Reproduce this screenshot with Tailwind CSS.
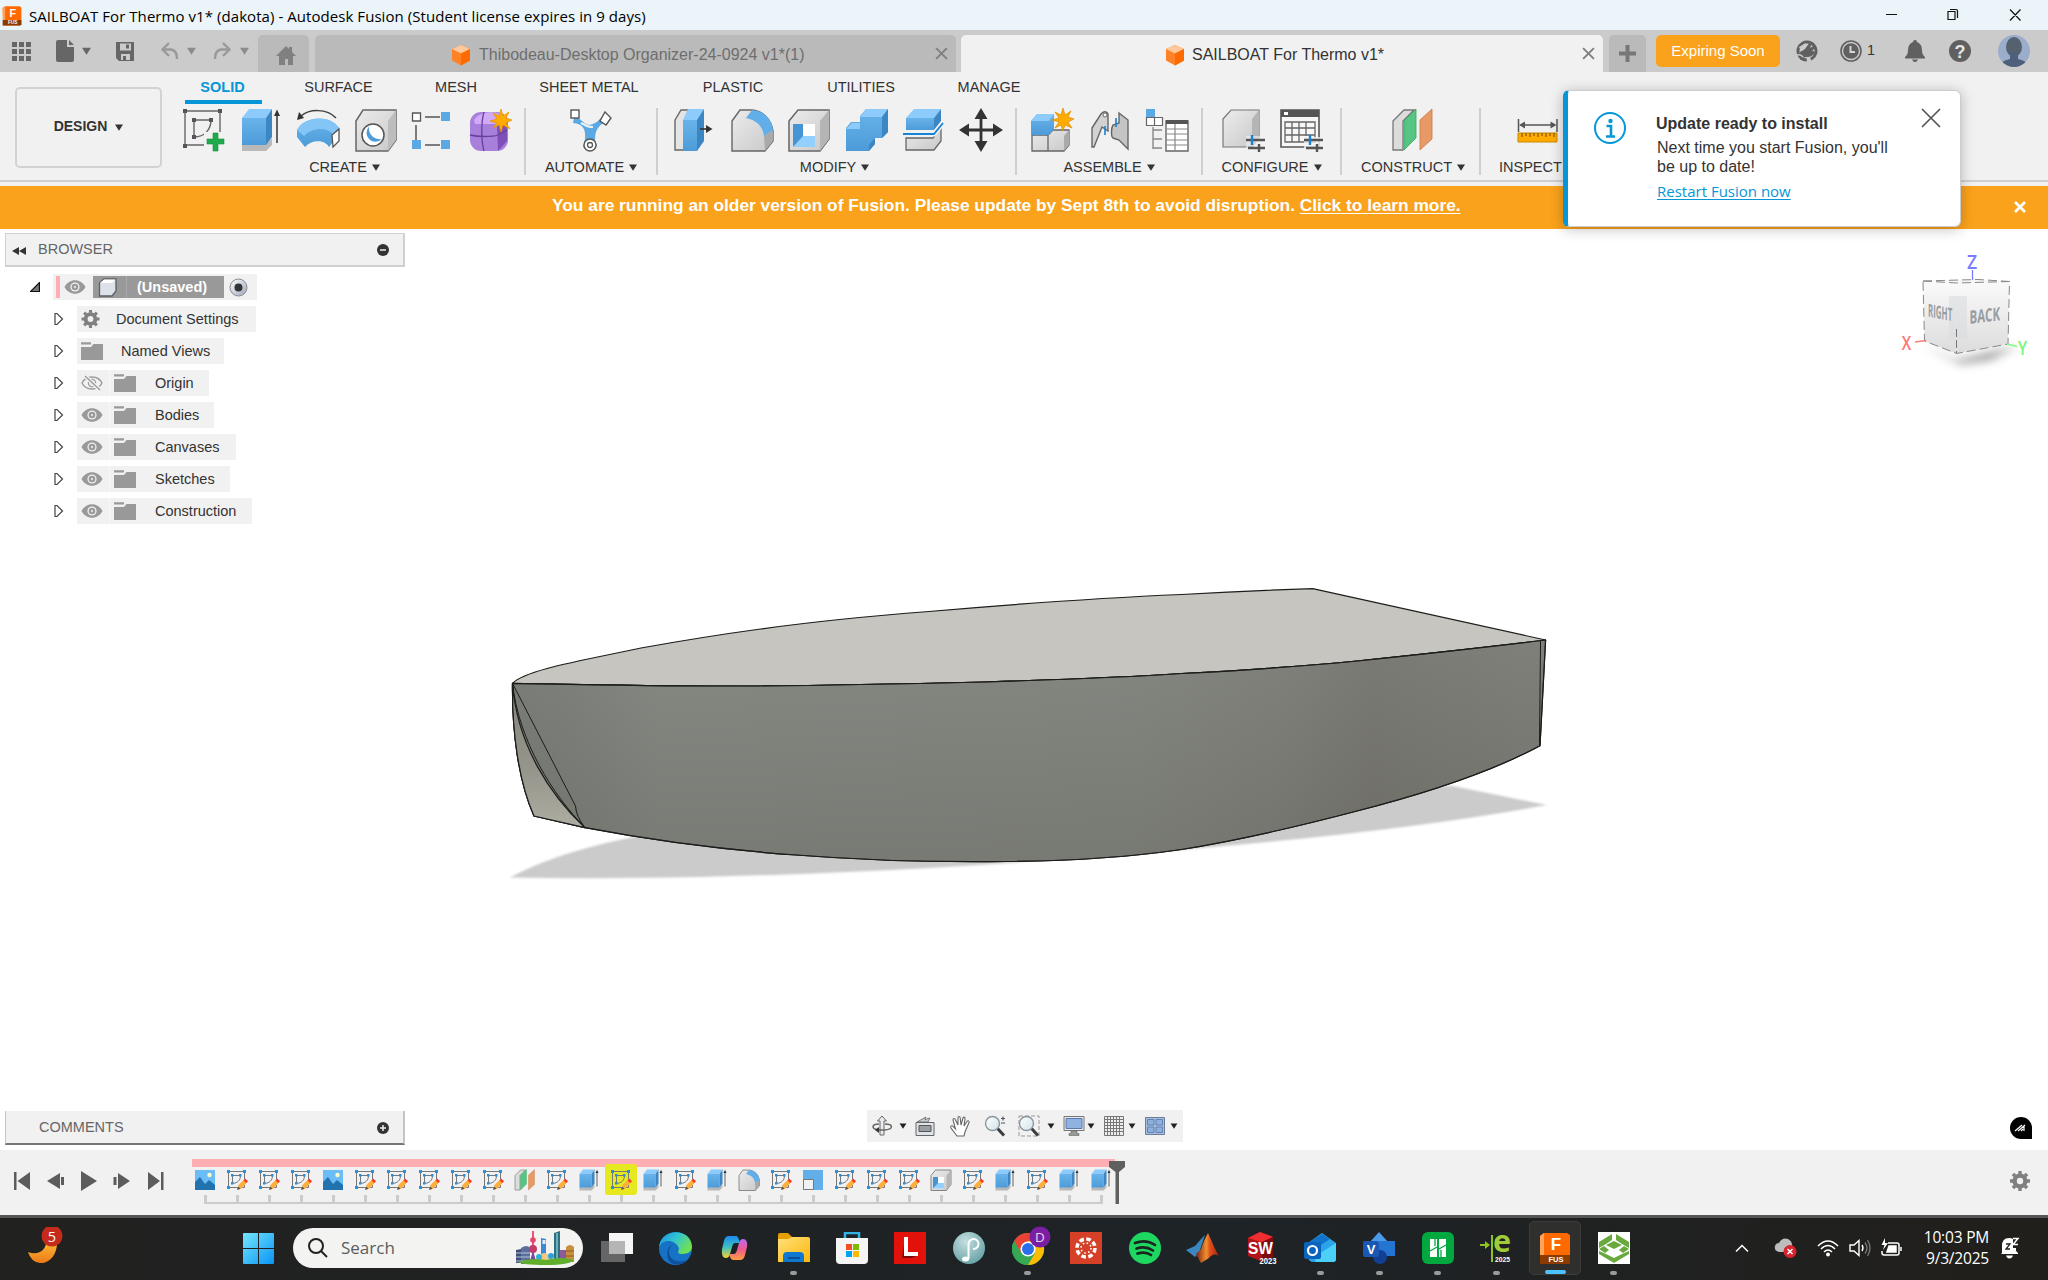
<!DOCTYPE html>
<html lang="en">
<head>
<meta charset="utf-8">
<title>SAILBOAT For Thermo v1* - Autodesk Fusion</title>
<script src="https://cdn.jsdelivr.net/npm/@tailwindcss/browser@4"></script>
</head>
<body class="w-[2048px] h-[1280px] overflow-hidden bg-white font-['Liberation_Sans',Arial,sans-serif] text-[14.5px] text-[#333]">
<svg width="0" height="0" class="absolute">
  <defs>
    <linearGradient id="blueF" x1="0" y1="0" x2="0" y2="1"><stop offset="0" stop-color="#69b3ea"/><stop offset="1" stop-color="#4c9bd8"/></linearGradient>
    <linearGradient id="greyF" x1="0" y1="0" x2="1" y2="1"><stop offset="0" stop-color="#ececec"/><stop offset="1" stop-color="#c8c8c8"/></linearGradient>
    <linearGradient id="hull" x1="513" x2="1546" y1="0" y2="0" gradientUnits="userSpaceOnUse"><stop offset="0" stop-color="#72746e"/><stop offset=".06" stop-color="#777a74"/><stop offset=".14" stop-color="#80847d"/><stop offset=".6" stop-color="#7e817a"/><stop offset=".74" stop-color="#777871"/><stop offset=".83" stop-color="#6f6e67"/><stop offset="1" stop-color="#75766f"/></linearGradient>
    <linearGradient id="hullV" x1="0" x2="0" y1="640" y2="862" gradientUnits="userSpaceOnUse"><stop offset="0" stop-color="#8f938c" stop-opacity=".35"/><stop offset="1" stop-color="#6a6b65" stop-opacity=".35"/></linearGradient>
    <linearGradient id="win" x1="0" y1="0" x2="1" y2="1"><stop offset="0" stop-color="#74e6fc"/><stop offset="1" stop-color="#0a94f6"/></linearGradient>
    <linearGradient id="moon" x1="0" y1="0" x2="0" y2="1"><stop offset="0" stop-color="#fcc438"/><stop offset="1" stop-color="#ee7a18"/></linearGradient>
    <linearGradient id="edgeG" x1="0" y1="0" x2="1" y2=".5"><stop offset="0" stop-color="#1b8de0"/><stop offset=".5" stop-color="#2fc3d4"/><stop offset="1" stop-color="#6fe055"/></linearGradient>
    <linearGradient id="copA" x1="0" y1="0" x2="0" y2="1"><stop offset="0" stop-color="#1a8cf0"/><stop offset=".5" stop-color="#3cc0c0"/><stop offset="1" stop-color="#f6d52c"/></linearGradient>
    <linearGradient id="copB" x1="0" y1="0" x2="0" y2="1"><stop offset="0" stop-color="#b66cf0"/><stop offset=".5" stop-color="#f05a8c"/><stop offset="1" stop-color="#ffa040"/></linearGradient>
    <linearGradient id="fold" x1="0" y1="0" x2="1" y2="1"><stop offset="0" stop-color="#ffe07a"/><stop offset="1" stop-color="#fcb70c"/></linearGradient>
    <linearGradient id="mat" x1="0" y1="0" x2="1" y2="0"><stop offset="0" stop-color="#7d1f12"/><stop offset=".45" stop-color="#f09030"/><stop offset=".6" stop-color="#e0501c"/><stop offset="1" stop-color="#a8200c"/></linearGradient>
    <linearGradient id="steel" x1="0" y1="0" x2="1" y2="1"><stop offset="0" stop-color="#fff"/><stop offset="1" stop-color="#9aa8bc"/></linearGradient>
    <linearGradient id="glass" x1="0" y1="0" x2="1" y2="1"><stop offset="0" stop-color="#fff"/><stop offset="1" stop-color="#cfe3e6"/></linearGradient>
    <radialGradient id="teal" cx=".4" cy=".3" r=".8"><stop offset="0" stop-color="#c4dede"/><stop offset="1" stop-color="#5f9da2"/></radialGradient>
    <linearGradient id="cubeF" x1="0" y1="0" x2="0" y2="1"><stop offset="0" stop-color="#fafafa"/><stop offset="1" stop-color="#dcdcdc"/></linearGradient>
    <linearGradient id="bowF" x1="0" y1="0" x2="0" y2="1"><stop offset="0" stop-color="#85857c"/><stop offset=".6" stop-color="#96958b"/><stop offset="1" stop-color="#aeada2"/></linearGradient>
    <filter id="soft" x="-30%" y="-60%" width="160%" height="220%"><feGaussianBlur stdDeviation="5"/></filter>
    <filter id="edge1"><feGaussianBlur stdDeviation="1"/></filter>
  </defs>
  <symbol id="caret" viewBox="0 0 8 7"><path d="M0 .5h8L4 6.800z" fill="currentColor"/></symbol>
  <symbol id="box" viewBox="0 0 20 22"><path d="M10 1l9 4v11.500l-9 5-9-5V5z" fill="#ff8326"/><path d="M10 1l9 4-9 4.500L1 5z" fill="#ffc79a"/><path d="M10 9.500L19 5v11.500l-9 5z" fill="#ff6a00"/></symbol>
  <symbol id="fusion" viewBox="0 0 32 32"><path d="M1 4l4-3h23l3 2v27l-2 2H2z" fill="#ff6a00"/><path d="M1 4l4-3v22H1z" fill="#ffa25c"/><path d="M1 23h30v7l-2 2H1z" fill="#8c3a00"/><text x="17" y="18" font-size="17" font-weight="bold" fill="#fff" text-anchor="middle" font-family="Liberation Sans">F</text><text x="17" y="30" font-size="7.500" font-weight="bold" fill="#fff" text-anchor="middle" font-family="Liberation Sans">FUS</text></symbol>
  <symbol id="cross" viewBox="0 0 12 12"><path d="M1 1l10 10M11 1L1 11" stroke="currentColor" fill="none" stroke-width="1.800"/></symbol>
  <symbol id="sketch" viewBox="0 0 44 44"><g stroke="#666" stroke-width="1.400" fill="none"><path d="M3 3h35v34H3z"/><path d="M12 12h17c0 9-6 17-17 17z"/></g><path d="M1 1h4v4H1zM36 1h4v4h-4zM1 36h4v4H1zM10 10h4v4h-4zM27 10h4v4h-4zM10 27h4v4h-4z" fill="#555"/><path d="M22 24h20v20H22z" fill="#f1f1f1"/><path d="M31 25h5v6h6v5h-6v7h-5v-7h-6v-5h6z" fill="#1fab4d" stroke="#16913e" stroke-width=".6"/></symbol>
  <symbol id="extrude" viewBox="0 0 44 44"><path d="M3 36h24l6-6v7l-6 6H3z" fill="#b9b9b9"/><path d="M3 10l7-9h23l-6 9z" fill="#8ccbfb"/><path d="M3 10h24v27H3z" fill="url(#blueF)"/><path d="M27 10l6-9v28l-6 8z" fill="#3d86c4"/><path d="M38 35V6" stroke="#333" stroke-width="1.500"/><path d="M35 8l3-6.500L41 8z" fill="#333"/></symbol>
  <symbol id="revolve" viewBox="0 0 44 44"><path d="M1 22C8 8 34 6 43 20l-6 14-4 5C28 31 15 32 9 39L1 29z" fill="url(#blueF)"/><path d="M1 22C8 8 34 6 43 20l-6 6C30 18 15 20 8 28z" fill="#84c5f8"/><path d="M36 27l7-6v12l-6 6z" fill="#fff" stroke="#555" stroke-width="1.300"/><path d="M5 8C13 1 31 0 40 10" stroke="#444" stroke-width="1.500" fill="none"/><path d="M1 12l2-8 5 6z" fill="#333"/></symbol>
  <symbol id="hole" viewBox="0 0 44 44"><path d="M2 13L9 2h33v30l-8 11H2z" fill="url(#greyF)" stroke="#666" stroke-width="1.500"/><path d="M34 13l8-11v30l-8 11z" fill="#bdbdbd"/><circle cx="19" cy="27" r="11" fill="#fff" stroke="#555" stroke-width="1.500"/><path d="M15 18.500A9 9 0 1 0 28 31 11 11 0 0 1 15 18.500z" fill="#4d9ddd"/></symbol>
  <symbol id="pattern" viewBox="0 0 44 44"><path d="M14 9h15M5 17v16M14 37h15" stroke="#555" stroke-width="1.500"/><path d="M1.500 5h8v8h-8z" fill="#fff" stroke="#555" stroke-width="1.300"/><path d="M30 4h9v9h-9zM30 32h9v9h-9zM1 32h9v9H1z" fill="#5aa9e4"/></symbol>
  <symbol id="form" viewBox="0 0 44 44"><rect x="2" y="4" width="38" height="39" rx="11" fill="#a97fdc"/><path d="M6 12C12 2 32 2 36 10l-8 6H7z" fill="#d0aaf8"/><path d="M29 17l10-8v24l-9 10z" fill="#7f4fb8"/><path d="M2 27c8 2 22 2 28 0l9-5M16 4c-3 10-3 28 0 39" stroke="#66419a" fill="none" stroke-width="1.300"/><path d="M33 1l2 7 6-4-3 6 6 2-6 3 4 6-7-4-2 7-2-7-6 3 4-5-7-2 7-2-4-6 6 3z" fill="#ffab00" stroke="#e59400" stroke-width=".7"/></symbol>
  <symbol id="automate" viewBox="0 0 44 44"><path d="M5 9c6 0 8 6 15 8 8-1 10-6 13-8l4 5c-8 3-11 9-11 18l2 6-7 5-7-4 2-8c1-10-2-15-12-16z" fill="#5aa9e4"/><path d="M12 15c8 4 8 4 12 4" stroke="#f1f1f1" stroke-width="2" fill="none"/><rect x="2" y="2" width="8" height="8" fill="#fff" stroke="#555" stroke-width="1.400"/><path d="M36 4l6 6-5 7-6-4z" fill="#fff" stroke="#555" stroke-width="1.400"/><circle cx="21" cy="37" r="6" fill="#fff" stroke="#555" stroke-width="1.400"/><circle cx="21" cy="37" r="2.500" fill="none" stroke="#555" stroke-width="1.300"/></symbol>
  <symbol id="press" viewBox="0 0 44 44"><path d="M2 12l6-10h9v32l-5 8H2z" fill="#e4e4e4" stroke="#666" stroke-width="1.400"/><path d="M10 12l5-11h16l-6 11z" fill="#8ccbfb"/><path d="M10 12h14v31H10z" fill="url(#blueF)"/><path d="M24 12l7-11v32l-7 10z" fill="#3d86c4"/><path d="M27 21h8" stroke="#333" stroke-width="1.600"/><path d="M33 17l6.500 4-6.500 4z" fill="#333"/></symbol>
  <symbol id="fillet" viewBox="0 0 44 44"><path d="M2 13L10 2h12c11 1 19 9 21 21v10l-8 10H2z" fill="url(#greyF)" stroke="#666" stroke-width="1.400"/><path d="M34 28l9-6v11l-8 10z" fill="#a9a9a9"/><path d="M22 2c12 1 20 9 21 20l-9 6C33 18 26 12 16 10z" fill="#62aee8"/></symbol>
  <symbol id="shell" viewBox="0 0 44 44"><path d="M2 13L11 2h31v29l-9 12H2z" fill="url(#greyF)" stroke="#666" stroke-width="1.500"/><path d="M33 13l9-11v29l-9 12z" fill="#b5b5b5"/><path d="M6 16h22v23H6z" fill="#fff"/><path d="M6 16h10v14L6 39z" fill="#4595d4"/><path d="M6 39l10-11h12v11z" fill="#93d0fd"/></symbol>
  <symbol id="combine" viewBox="0 0 44 44"><path d="M1 20l5-6h9V8l6-7h22v23l-6 6h-7v6l-6 7H1z" fill="url(#blueF)"/><path d="M15 9l6-8h22l-6 8zM1 21l6-6h8v6z" fill="#8ccbfb"/><path d="M37 9l6-8v23l-6 6zM24 37l6-7v6l-6 7z" fill="#3d86c4"/></symbol>
  <symbol id="split" viewBox="0 0 44 44"><path d="M4 10l8-9h27l-7 9z" fill="#8ccbfb"/><path d="M4 10h28v12H4z" fill="url(#blueF)"/><path d="M32 10l7-9v12l-7 9z" fill="#3d86c4"/><path d="M4 30h27l8-11v14l-7 9H4z" fill="url(#greyF)" stroke="#666" stroke-width="1.300"/><path d="M1 26h31l9-11" stroke="#f1f1f1" stroke-width="5" fill="none"/><path d="M1 26h31l9-11" stroke="#1483d8" stroke-width="1.800" fill="none"/></symbol>
  <symbol id="move" viewBox="0 0 44 44"><path d="M22 6v32M6 22h32" stroke="#333" stroke-width="2.800"/><path d="M22 0l6.500 11h-13zM22 44l6.500-11h-13zM0 22l10-6.500v13zM44 22l-10-6.500v13z" fill="#333"/></symbol>
  <symbol id="newcomp" viewBox="0 0 44 44"><path d="M2 27h16v16H2zM18 27l5-5h16v15l-5 6H18z" fill="url(#greyF)" stroke="#666" stroke-width="1.300"/><path d="M34 28l5-6v15l-5 6z" fill="#aaa"/><path d="M1 13l6-7h17v15l-5 6H1z" fill="url(#blueF)"/><path d="M1 13l6-7h17l-5 7z" fill="#8ccbfb"/><path d="M33 0l2 7 6-4-3 6 6 2-6 3 4 6-7-3-2 6-2-6-6 3 4-6-7-2 7-2-4-6 6 3z" fill="#ffab00" stroke="#d98c00" stroke-width=".7"/></symbol>
  <symbol id="joint" viewBox="0 0 44 44"><path d="M4 20L13 6c3-4 7-2 7 1v16l-6-4-8 20H4z" fill="#d2d2d2" stroke="#666" stroke-width="1.400"/><circle cx="17" cy="7" r="2" fill="#fff" stroke="#666"/><path d="M31 5l9 7v29l-9-9-6-2c-2-1-2-10 0-13l6-2z" fill="#c4c4c4" stroke="#666" stroke-width="1.400"/><path d="M17 18v9M28 10v9" stroke="#1483d8" stroke-width="1.600"/></symbol>
  <symbol id="bom" viewBox="0 0 44 44"><path d="M1 1h9v8H1z" fill="#5aa9e4"/><path d="M1.500 9.500h8v8h-8zM9.500 9.500h8v8h-8z" fill="#fff" stroke="#666" stroke-width="1.200"/><path d="M8 19v22M8 22h9M8 31h9M8 40h9" stroke="#888" stroke-width="1.400" fill="none"/><path d="M21 13h22v30H21z" fill="#fff" stroke="#666" stroke-width="1.400"/><path d="M21 12h22v4H21z" fill="#555"/><path d="M21 21h22M21 26h22M21 32h22M21 37h22M30 16v27" stroke="#888" stroke-width="1.200"/></symbol>
  <symbol id="config" viewBox="0 0 44 44"><path d="M2 11l8-9h28v27l-7 10H2z" fill="url(#greyF)" stroke="#777" stroke-width="1.200"/><path d="M31 11l7-9v27l-7 10z" fill="#b5b5b5"/><path d="M25 28h20v16H25z" fill="#f1f1f1" opacity=".6"/><path d="M25 32h19M27 40h17M38 36v8" stroke="#555" stroke-width="2.400"/><path d="M31 27v10" stroke="#1483d8" stroke-width="2.400"/></symbol>
  <symbol id="ctable" viewBox="0 0 44 44"><path d="M2 2h38v37H2z" fill="#f7f7f7" stroke="#555" stroke-width="1.600"/><path d="M2 2h38v7H2z" fill="#555"/><path d="M5 4h4v3H5z" fill="#fff"/><path d="M6 14h30v20H6zM6 20h30M6 27h30M13 14v20M20 14v20M27 14v14" fill="none" stroke="#666" stroke-width="1.300"/><path d="M25 29h20v15H25z" fill="#f1f1f1" opacity=".8"/><path d="M25 32h19M27 40h17M38 36v8" stroke="#555" stroke-width="2.400"/><path d="M31 27v10" stroke="#1483d8" stroke-width="2.400"/></symbol>
  <symbol id="plane" viewBox="0 0 44 44"><path d="M2 13L13 2h10L12 13v29H2z" fill="#dcdcdc" stroke="#777" stroke-width="1.300"/><path d="M13 13L25 1v29L13 42z" fill="#56c583" stroke="#3aa565" stroke-width=".8"/><path d="M29 12L41 1v30L29 42z" fill="#e89a66" stroke="#c87a46" stroke-width=".8"/></symbol>
  <symbol id="measure" viewBox="0 0 44 44"><path d="M1.500 11v13M40 11v13M6 17h30" stroke="#555" stroke-width="1.500"/><path d="M2 17l6-3.500v7zM39.500 17l-6-3.500v7z" fill="#555"/><path d="M1 25h39v9H1z" fill="#ffab00" stroke="#c98700" stroke-width="1"/><path d="M5 25v4M9 25v3M13 25v4M17 25v3M21 25v4M25 25v3M29 25v4M33 25v3M37 25v4" stroke="#6b4a00" stroke-width="1"/></symbol>
  <symbol id="eye" viewBox="0 0 22 16"><path d="M.5 8C5-1 17-1 21.500 8 17 17 5 17 .5 8z" fill="#999"/><circle cx="11" cy="8" r="4.600" fill="#f1f1f1"/><circle cx="11" cy="8" r="3.300" fill="#999"/><circle cx="11" cy="8" r="1.200" fill="#ddd"/></symbol>
  <symbol id="eyeoff" viewBox="0 0 22 16"><path d="M1 8C5 0 17 0 21 8 17 16 5 16 1 8z" fill="none" stroke="#999" stroke-width="1.300"/><circle cx="11" cy="8" r="3.600" fill="none" stroke="#999" stroke-width="1.300"/><circle cx="11" cy="8" r="1.300" fill="#999"/><path d="M4 1l15 14" stroke="#f1f1f1" stroke-width="4"/><path d="M4 1l15 14" stroke="#999" stroke-width="1.300"/></symbol>
  <symbol id="folder" viewBox="0 0 22 18"><path d="M0 5h10l2.500-3H22v16H0zM0 .3h10v2.200H0z" fill="#999"/></symbol>
  <symbol id="gear" viewBox="0 0 20 20"><path d="M8.300 0h3.400v3h-3.400zM8.300 17h3.400v3h-3.400zM0 8.300h3v3.400H0zM17 8.300h3v3.400h-3z" fill="#808080"/><path d="M8.300 0h3.400v3h-3.400zM8.300 17h3.400v3h-3.400zM0 8.300h3v3.400H0zM17 8.300h3v3.400h-3z" fill="#808080" transform="rotate(45 10 10)"/><circle cx="10" cy="10" r="5.400" fill="none" stroke="#808080" stroke-width="4.400"/></symbol>
  <symbol id="arrow" viewBox="0 0 10 14"><path d="M1 1.500h2L8.500 7 3 12.500H1z" fill="#fff" stroke="#444" stroke-width="1.200"/></symbol>
  <symbol id="t-sketch" viewBox="0 0 22 22"><path d="M2.500 2.500h16v16h-16zM6.500 6.500h8c0 5-3 7.500-8 8z" stroke="#777" stroke-width="1" fill="none"/><path d="M1 1h3v3H1zM17 1h3v3h-3zM1 17h3v3H1zM5 5h2.500v2.500H5zM13 5h2.500v2.500H13zM5 13h2.500v2.500H5z" fill="#2a8fdc"/><path d="M11 21l1.500-5 6-6 3 3-6 6.500z" fill="#fbb03b"/><path d="M17.500 11.500l1.800-2 2.700 2.700-1.800 1.800z" fill="#f03c2e"/><path d="M11 21l1.200-3.600 2.300 2.300z" fill="#555"/></symbol>
  <symbol id="t-canvas" viewBox="0 0 22 22"><path d="M1 1h20v20H1z" fill="#6cbcf5"/><path d="M1 13l5-5 5 7 4-4 6 5v5H1z" fill="#2372b0"/><circle cx="15.500" cy="6" r="2.200" fill="#f7fbd0"/></symbol>
  <symbol id="t-scale" viewBox="0 0 22 22"><path d="M1 1h20v20H1z" fill="#62aee8"/><path d="M1.500 10.500h10v10h-10z" fill="#f1f1f1" stroke="#777"/></symbol>
  <symbol id="lens" viewBox="0 0 22 22"><path d="M13.500 13.500l6.500 7" stroke="#3c3c3c" stroke-width="3"/><circle cx="8.500" cy="8.500" r="7" fill="url(#glass)" stroke="#8b949e" stroke-width="1.400"/></symbol>
</svg>

<div class="flex h-full flex-col">
  <!-- Window title -->
  <header class="flex h-[30px] shrink-0 items-center bg-[#ebf4f8] pl-[2px] text-black">
    <svg class="h-[23px] w-[20px]" preserveAspectRatio="none"><use href="#fusion"/></svg>
    <span class="mt-[2px] ml-[7px] flex-1 whitespace-nowrap font-['Open_Sans','Noto_Sans',sans-serif] text-[15px] tracking-[0.06px]">SAILBOAT For Thermo v1* (dakota) - Autodesk Fusion (Student license expires in 9 days)</span>
    <svg class="mr-[26px] h-[30px] w-[136px]" viewBox="0 0 136 30" fill="none" stroke="#111" stroke-width="1.200"><path d="M0 14.500h11M63 11.500h6v8h-7v-8zM64 9.500h6q1.500 0 1.500 1.500v7M124 9.500l10.500 11M134.500 9.500l-10.500 11"/></svg>
  </header>

  <!-- Quick access and document tabs -->
  <nav class="flex h-[42px] shrink-0 items-end bg-[#cbcbcb]">
    <div class="flex h-[42px] w-[258px] items-center pl-3 text-[#666]">
      <svg class="h-[19px] w-[19px]" viewBox="0 0 19 19" fill="#666"><path d="M0 0h5v5H0zM7 0h5v5H7zM14 0h5v5h-5zM0 7h5v5H0zM7 7h5v5H7zM14 7h5v5h-5zM0 14h5v5H0zM7 14h5v5H7zM14 14h5v5h-5z"/></svg>
      <svg class="ml-[25px] h-[22px] w-[18px]" viewBox="0 0 18 22" fill="#666"><path d="M0 2Q0 0 2 0h9v7h7v13q0 2-2 2H2q-2 0-2-2zM13 0l5 5h-5z"/></svg>
      <svg class="ml-[8px] h-[8px] w-[9px]"><use href="#caret"/></svg>
      <svg class="ml-[25px] h-[19px] w-[19px]" viewBox="0 0 19 19"><path d="M1 0h17v19H3l-3-3V0z" fill="#666"/><path d="M4 1.500h11v7H4z" fill="#cbcbcb"/><path d="M10 2.500h3v4h-3z" fill="#666"/><path d="M5 12h9v6H5z" fill="#cbcbcb"/><path d="M7 14h3v4H7z" fill="#666"/></svg>
      <svg class="ml-[26px] h-[18px] w-[18px]" viewBox="0 0 18 18" fill="none" stroke="#999" stroke-width="2.400"><path d="M8 1L1.500 7.500 8 14M2 7.500h8q6 1 6 9.500"/></svg>
      <svg class="ml-[8px] h-[8px] w-[9px] text-[#8c8c8c]"><use href="#caret"/></svg>
      <svg class="ml-[17px] h-[18px] w-[18px]" viewBox="0 0 18 18" fill="none" stroke="#999" stroke-width="2.400"><path d="M10 1l6.500 6.500L10 14M16 7.500H8Q2 8.500 2 17"/></svg>
      <svg class="ml-[9px] h-[8px] w-[9px] text-[#8c8c8c]"><use href="#caret"/></svg>
    </div>
    <div class="flex h-[37px] w-[51px] items-center justify-center rounded-t-[5px] bg-[#bababa]">
      <svg class="mt-1 ml-1 h-[19px] w-[20px]" viewBox="0 0 20 19" fill="#808080"><path d="M10 0l3 3V1h3v5l4 4h-3v9h-5v-6H9v6H3v-9H0z"/></svg>
    </div>
    <div class="ml-[6px] flex h-[37px] w-[641px] items-center rounded-t-[5px] bg-[#bababa] pl-[136px] text-[#6e6e6e]">
      <svg class="mt-[3px] h-[22px] w-[20px]"><use href="#box"/></svg>
      <span class="mt-[3px] ml-[8px] flex-1 whitespace-nowrap text-[16px]">Thibodeau-Desktop Organizer-24-0924 v1*(1)</span>
      <svg class="mr-[8px] h-[13px] w-[13px] text-[#808080]"><use href="#cross"/></svg>
    </div>
    <div class="ml-[5px] flex h-[37px] w-[642px] items-center rounded-t-[5px] bg-[#f1f1f1] pl-[204px]">
      <svg class="mt-[3px] h-[22px] w-[20px]"><use href="#box"/></svg>
      <span class="mt-[3px] ml-[7px] flex-1 whitespace-nowrap text-[16px]">SAILBOAT For Thermo v1*</span>
      <svg class="mr-[8px] h-[13px] w-[13px] text-[#808080]"><use href="#cross"/></svg>
    </div>
    <div class="ml-[6px] flex h-[37px] w-[37px] items-center justify-center rounded-t-[5px] bg-[#bababa]">
      <svg class="h-[17px] w-[17px]" viewBox="0 0 17 17"><path d="M8.500 0v17M0 8.500h17" stroke="#777" stroke-width="4"/></svg>
    </div>
    <div class="ml-[10px] flex h-[42px] flex-1 items-center">
      <span class="flex h-[32px] w-[124px] items-center justify-center rounded-[5px] bg-[#faa21b] text-[15px] whitespace-nowrap text-white">Expiring Soon</span>
      <svg class="ml-[16px] h-[22px] w-[22px]" viewBox="0 0 22 22"><circle cx="11" cy="11" r="9" fill="none" stroke="#606060" stroke-width="3" stroke-dasharray="43 4 10 0" transform="rotate(150 11 11)"/><path d="M4 12l5-3 5-7 2 1-2 5 5-3 1 2-4 4q2 0 3 1-2 5-8 5-5 0-7 3z" fill="#606060"/><path d="M1 15q4-1 6 2" stroke="#cbcbcb" stroke-width="1.500" fill="none"/><path d="M3 7q1 3 3 4l3-4 1-4z" fill="#cbcbcb"/></svg>
      <svg class="ml-[22px] h-[22px] w-[22px]" viewBox="0 0 22 22"><circle cx="11" cy="11" r="10" fill="none" stroke="#606060" stroke-width="1.600"/><circle cx="11" cy="11" r="7.800" fill="#606060"/><path d="M10.500 6v6H15" stroke="#d5d5d5" stroke-width="2" fill="none"/></svg>
      <span class="ml-[5px] w-[9px] text-[14.500px]">1</span>
      <svg class="ml-[29px] h-[22px] w-[20px]" viewBox="0 0 20 22" fill="#606060"><path d="M10 0q2 0 2 2 5 2 5 8 0 5 3 7v1.500H0V17q3-2 3-7 0-6 5-8 0-2 2-2zM7 19.500h6q-1 2.500-3 2.500t-3-2.500z"/></svg>
      <svg class="ml-[24px] h-[22px] w-[22px]" viewBox="0 0 22 22"><circle cx="11" cy="11" r="11" fill="#606060"/><text x="11" y="17.500" text-anchor="middle" font-size="18" font-weight="bold" fill="#e5e5e5" font-family="Liberation Sans">?</text></svg>
      <svg class="ml-[27px] h-[32px] w-[32px] rounded-full" viewBox="0 0 32 32"><path d="M0 0h32v32H0z" fill="#9aaecb"/><ellipse cx="16" cy="12" rx="8" ry="10" fill="#56616f"/><path d="M12 18h8v6q10 2 10 8H2q0-6 10-8z" fill="#4e5f7b"/></svg>
    </div>
  </nav>

  <!-- Ribbon -->
  <section class="flex h-[110px] shrink-0 border-b-2 border-[#cfcfcf] bg-[#f1f1f1]">
    <div class="mt-[15px] ml-[15px] flex h-[81px] w-[147px] items-center justify-center gap-2 rounded-[5px] border-2 border-[#d2d2d2] pb-[3px] text-[14px] font-bold">DESIGN<svg class="mt-[2px] h-[7px] w-[8px]"><use href="#caret"/></svg></div>
    <div class="ml-[8px] flex flex-1 flex-col">
      <div class="flex h-[32px] shrink-0 pl-[15px] text-center leading-[31px] whitespace-nowrap">
        <span class="w-[77px] border-b-4 border-[#0696d7] pr-[2px] leading-[31px] font-bold text-[#0696d7]">SOLID</span><span class="w-[153px]">SURFACE</span><span class="w-[82px]">MESH</span><span class="w-[184px]">SHEET METAL</span><span class="w-[104px]">PLASTIC</span><span class="w-[152px]">UTILITIES</span><span class="w-[104px]">MANAGE</span>
      </div>
      <div class="flex flex-1 pt-1">
        <div class="flex h-[67px] w-[356px] flex-col border-r-2 border-[#cfcfcf]">
          <div class="flex h-[44px] gap-[13.400px] pl-[11.500px]">
            <svg class="size-[44px]"><use href="#sketch"/></svg><svg class="size-[44px]"><use href="#extrude"/></svg><svg class="size-[44px]"><use href="#revolve"/></svg><svg class="size-[44px]"><use href="#hole"/></svg><svg class="size-[44px]"><use href="#pattern"/></svg><svg class="size-[44px]"><use href="#form"/></svg>
          </div>
          <div class="flex items-center justify-center gap-[5px] pt-[5px] pr-[5px]">CREATE<svg class="h-[7px] w-[8px]"><use href="#caret"/></svg></div>
        </div>
        <div class="flex h-[67px] w-[132px] flex-col border-r-2 border-[#cfcfcf]">
          <div class="flex h-[44px] pl-[43px]"><svg class="size-[44px]"><use href="#automate"/></svg></div>
          <div class="flex items-center justify-center gap-[5px] pt-[5px]">AUTOMATE<svg class="h-[7px] w-[8px]"><use href="#caret"/></svg></div>
        </div>
        <div class="flex h-[67px] w-[359px] flex-col border-r-2 border-[#cfcfcf]">
          <div class="flex h-[44px] gap-[13.200px] pl-[15px]">
            <svg class="size-[44px]"><use href="#press"/></svg><svg class="size-[44px]"><use href="#fillet"/></svg><svg class="size-[44px]"><use href="#shell"/></svg><svg class="size-[44px]"><use href="#combine"/></svg><svg class="size-[44px]"><use href="#split"/></svg><svg class="size-[44px]"><use href="#move"/></svg>
          </div>
          <div class="flex items-center justify-center gap-[5px] pt-[5px] pr-[4px]">MODIFY<svg class="h-[7px] w-[8px]"><use href="#caret"/></svg></div>
        </div>
        <div class="flex h-[67px] w-[186px] flex-col border-r-2 border-[#cfcfcf]">
          <div class="flex h-[44px] gap-[13.500px] pl-[13px]"><svg class="size-[44px]"><use href="#newcomp"/></svg><svg class="size-[44px]"><use href="#joint"/></svg><svg class="size-[44px]"><use href="#bom"/></svg></div>
          <div class="flex items-center justify-center gap-[5px] pt-[5px]">ASSEMBLE<svg class="h-[7px] w-[8px]"><use href="#caret"/></svg></div>
        </div>
        <div class="flex h-[67px] w-[139px] flex-col border-r-2 border-[#cfcfcf]">
          <div class="flex h-[44px] gap-[14px] pl-[18px]"><svg class="size-[44px]"><use href="#config"/></svg><svg class="size-[44px]"><use href="#ctable"/></svg></div>
          <div class="flex items-center justify-center gap-[5px] pt-[5px]">CONFIGURE<svg class="h-[7px] w-[8px]"><use href="#caret"/></svg></div>
        </div>
        <div class="flex h-[67px] w-[139px] flex-col border-r-2 border-[#cfcfcf]">
          <div class="flex h-[44px] pl-[49px]"><svg class="size-[44px]"><use href="#plane"/></svg></div>
          <div class="flex items-center justify-center gap-[5px] pt-[5px] pl-[5px]">CONSTRUCT<svg class="h-[7px] w-[8px]"><use href="#caret"/></svg></div>
        </div>
        <div class="flex h-[67px] w-[120px] flex-col">
          <div class="flex h-[44px] pl-[36px]"><svg class="size-[44px]"><use href="#measure"/></svg></div>
          <div class="pt-[5px] pl-[18px]">INSPECT</div>
        </div>
      </div>
    </div>
  </section>

  <!-- Update banner -->
  <section class="flex h-[47px] shrink-0 items-center border-t-4 border-[#f1f1f1] bg-[#faa21b] pl-[552px] text-[17.330px] font-bold whitespace-nowrap text-white">
    <span class="flex-1 pb-[4px]">You are running an older version of Fusion. Please update by Sept 8th to avoid disruption. <u class="underline-offset-2">Click to learn more.</u></span>
    <svg class="mr-[22px] mb-[2px] h-[12px] w-[12px]" viewBox="0 0 12 12"><path d="M1 1l10 10M11 1L1 11" stroke="#fff" stroke-width="2.800"/></svg>
  </section>

  <!-- Modelling canvas -->
  <main class="relative flex flex-1 flex-col justify-between overflow-hidden bg-white pt-1 pb-[5px] pl-[5px]">
    <svg class="absolute top-0 left-0" width="2048" height="921" viewBox="0 229 2048 921">
      <g filter="url(#edge1)" fill="#cbcbcb"><path d="M510 877.500C530 867 570 848 650 834L1027 861.700C930 869 790 875 700 877Q600 879 510 877.500z"/><path d="M1451.600 785.700L1546.500 805Q1400 832 1167 851L1300 800z"/></g>
      <g stroke="#1c1c1a" stroke-width="1.200" stroke-linejoin="round">
        <path d="M512.500 683.300C525 670 580 661 641 648C680 641 720 634.500 760.600 629C815 621.500 870 616 929 611.500C1010 604.500 1100 598 1181.500 594.500Q1250 590.500 1312.700 588.700L1545.600 640L1540.700 641C1480 648 1415 655 1357 661C1300 666.500 1240 670.500 1181.500 673.500C1115 678 1050 680 985 682C900 684 800 686 725 686C650 686 580 684.500 512.500 683.300z" fill="#c6c5bf"/>
        <path id="hullShape" d="M512.500 683.300C580 684.500 650 686 725 686C800 686 900 684 985 682C1050 680 1115 678 1181.500 673.500C1240 670.500 1300 666.500 1357 661C1415 655 1480 648 1545.600 640L1540 745.700C1480 778 1400 800 1357 811C1300 826 1240 840 1181.500 849.500C1130 857 1070 861 1006 861.500C930 862.500 860 860 796 855C725 850 650 840 585 827.700L534 816C518 780 512 730 512.500 683.300z" fill="url(#hull)"/>
        <path d="M512.500 683.300C580 684.500 650 686 725 686C800 686 900 684 985 682C1050 680 1115 678 1181.500 673.500C1240 670.500 1300 666.500 1357 661C1415 655 1480 648 1545.600 640L1540 745.700C1480 778 1400 800 1357 811C1300 826 1240 840 1181.500 849.500C1130 857 1070 861 1006 861.500C930 862.500 860 860 796 855C725 850 650 840 585 827.700L534 816C518 780 512 730 512.500 683.300z" fill="url(#hullV)"/>
        <path d="M512.500 683.300C512 730 518 780 534 816L585 827.700C550 795 517 745 512.500 683.300z" fill="url(#bowF)"/>
        <path d="M512.500 683.300C519 742 553 795 585 827.700M512.500 683.300L575.500 806Q576 816 585 827.700M1540.500 641L1539.500 745" fill="none" stroke-width="1"/>
      </g>
      <!-- view cube -->
      <path d="M1920 344L1957 360 2018 346 1990 360 1960 364z" fill="#777" opacity=".8" filter="url(#soft)"/>
      <path d="M1923 280.500L1978 279.500 2009.500 281 1956.500 284z" fill="#f6f6f6"/>
      <path d="M1923 281L1956.500 283V353.500L1924.500 341z" fill="url(#cubeF)"/><path d="M1956.500 283L2009.500 281.500 2008 344 1956.500 353.500z" fill="url(#cubeF)"/>
      <path d="M1949 296h18v43h-18z" fill="#d9dce0" opacity=".6"/>
      <path d="M1923 281L1956.500 283 2009.500 281.500 2008 344 1956.500 353.500 1924.500 341zM1923 281l55-1.500 31.500 2" fill="none" stroke="#888" stroke-width="1" stroke-dasharray="9 4"/><path d="M1956.500 329v24" stroke="#777" stroke-dasharray="8 3"/>
      <text transform="translate(1928 316.500) skewY(11) scale(.44 1)" font-family="Open Sans" font-weight="bold" font-size="18" fill="#999da1">RIGHT</text>
      <text transform="translate(1969.500 324) skewY(-7) scale(.62 1)" font-family="Open Sans" font-weight="bold" font-size="18.500" fill="#999da1">BACK</text>
      <g stroke-width="1.300"><path d="M1972.500 270v10" stroke="#7b7bff"/><path d="M1915 342l11-1.500" stroke="#ff7b7b"/><path d="M2007 344l10 2.500" stroke="#7bff7b"/></g>
      <g font-family="Open Sans" font-weight="600" font-size="19" text-anchor="middle"><text transform="translate(1972 268.500) scale(.93 1)" fill="#7b7bff">Z</text><text transform="translate(1906.500 349.500) scale(.8 1)" fill="#ff7676">X</text><text transform="translate(2022.500 355) scale(.8 1)" fill="#76f576">Y</text></g>
    </svg>

    <section class="relative">
      <div class="flex h-[34px] w-[400px] items-center border border-r-2 border-b-2 border-[#d0d0d0] bg-[#f1f1f1] pr-[14px] pl-[6px] text-[#666]">
        <svg class="mt-[2px] h-[8px] w-[14px]" viewBox="0 0 14 8" fill="#333"><path d="M7 0v8L0 4zM14 0v8L7 4z"/></svg>
        <span class="ml-[12px] flex-1 pt-[1px]">BROWSER</span>
        <svg class="mt-px h-[12px] w-[12px]" viewBox="0 0 12 12"><circle cx="6" cy="6" r="6" fill="#333"/><path d="M3 6h6" stroke="#eee" stroke-width="1.500"/></svg>
      </div>
      <div class="mt-[7px] flex h-[26px] items-center pl-[25px]">
        <svg class="h-[10px] w-[10px]" viewBox="0 0 10 10"><path d="M9.500.5v9h-9z" fill="#777" stroke="#111" stroke-width="1.200"/></svg>
        <div class="ml-[13px] flex h-[26px] w-[204px] items-center bg-[#f1f1f1] pl-[3px]">
          <i class="h-[22px] w-[4px] bg-[#ffaeb3]"></i>
          <svg class="ml-[4px] h-[16px] w-[22px]"><use href="#eye"/></svg>
          <div class="ml-[7px] flex h-[22px] w-[131px] items-center bg-[#999] pl-[5px] font-bold text-white">
            <svg class="h-[19px] w-[20px]" viewBox="0 0 20 19"><path d="M1.500 5L6 1h12v12l-4 5H1.500z" fill="#dde1ea" stroke="#5a5e66" stroke-width="1.300"/><path d="M2 5l4-3.500h11.500L14 5z" fill="#fff"/></svg>
            <i class="ml-[8px] h-[22px] w-px bg-[#aaa]"></i>
            <span class="mt-px ml-[10px]">(Unsaved)</span>
          </div>
          <svg class="ml-[5px] h-[19px] w-[19px]" viewBox="0 0 19 19"><circle cx="9.500" cy="9.500" r="8.500" fill="url(#steel)" stroke="#888"/><circle cx="9.500" cy="9.500" r="4" fill="#333"/></svg>
        </div>
      </div>
      <div id="tree" class="mt-[6px] flex flex-col gap-[6px] pl-[49px] text-[14.500px]"></div>
    </section>

    <div class="relative flex items-start">
      <section class="mt-[1px] flex h-[34px] w-[400px] items-center border-r-2 border-b-2 border-l border-[#c5c5c5] border-b-[#777] bg-[#f1f1f1] pr-[14px] pl-[33px] text-[#666]">
        <span class="flex-1 pt-[2px]">COMMENTS</span>
        <svg class="mt-px h-[12px] w-[12px]" viewBox="0 0 12 12"><circle cx="6" cy="6" r="6" fill="#333"/><path d="M3 6h6M6 3v6" stroke="#eee" stroke-width="1.500"/></svg>
      </section>
      <section class="ml-[462px] flex h-[32px] w-[316px] items-center bg-[#f1f1f1] pl-[4px] text-[#222]">
        <svg class="h-[22px] w-[22px]" viewBox="0 0 22 22"><path d="M9 20V6H6.500L11 1l4.500 5H13v14z" fill="#e8ebef" stroke="#666"/><path d="M8 9C1 9-1 14 8 15M14 9c8 0 9 5 0 6H8" stroke="#666" stroke-width="1.500" fill="none"/><path d="M8 12v6l-4-3z" fill="#333"/></svg>
        <svg class="ml-[6px] h-[6px] w-[8px]"><use href="#caret"/></svg>
        <svg class="ml-[8px] h-[22px] w-[20px]" viewBox="0 0 20 22"><path d="M1 7.500h18v13H1z" fill="#dfe3e8" stroke="#666"/><path d="M4 10.500h12v6H4z" fill="#9a9fa6" stroke="#555"/><path d="M2 7l9-5-1 2.500 5-1.500-2 4z" fill="#c5cad0" stroke="#666" stroke-width=".8"/></svg>
        <svg class="ml-[14px] h-[22px] w-[22px]" viewBox="0 0 22 22"><path d="M8 21L2 13c-1-2 1-3 2-1.500L6.500 14 4 5c0-2 2-2 2.500 0L9 10V3c0-2 2-2 2.200 0L12 10l2-7c.5-1.500 2.500-1 2 .8L15 11l3-4.500c1-1.500 2.500-.5 2 1L16 17l-1 4z" fill="#fff" stroke="#666" stroke-width="1.100"/></svg>
        <svg class="ml-[13px] h-[22px] w-[22px]" viewBox="0 0 22 22"><use href="#lens"/><path d="M17 3.500h4M19 1.500v4M17 8h4" stroke="#555" stroke-width="1.200"/></svg>
        <svg class="ml-[12px] h-[22px] w-[22px]" viewBox="0 0 22 22"><path d="M1 1h20v20H1z" fill="none" stroke="#999" stroke-dasharray="4 2"/><use href="#lens"/></svg>
        <svg class="ml-[7px] h-[6px] w-[8px]"><use href="#caret"/></svg>
        <svg class="ml-[8px] h-[22px] w-[22px]" viewBox="0 0 22 22"><path d="M1 1.500h20v14H1z" fill="#e7e9ec" stroke="#777"/><path d="M3 3.500h16v10H3z" fill="#8fb2e0" stroke="#5b7bad"/><path d="M8 16h6v2.500h2v2H6v-2h2z" fill="#999" stroke="#666" stroke-width=".6"/></svg>
        <svg class="ml-[2px] h-[6px] w-[8px]"><use href="#caret"/></svg>
        <svg class="ml-[9px] h-[20px] w-[20px]" viewBox="0 0 20 20"><path d="M.5.5h19v19H.5z" fill="#eee"/><path d="M.5.5h19v19H.5zM3.500 0v20M6.500 0v20M9.500 0v20M12.500 0v20M15.500 0v20M0 3.500h20M0 6.500h20M0 9.500h20M0 12.500h20M0 15.500h20" stroke="#777" fill="none"/></svg>
        <svg class="ml-[4px] h-[6px] w-[8px]"><use href="#caret"/></svg>
        <svg class="ml-[9px] h-[18px] w-[20px]" viewBox="0 0 20 18"><path d="M.5.5h19v17H.5z" fill="#a9bfde" stroke="#6a7d9c"/><path d="M2.500 2.500H9V8H2.500zM11 2.500h6.500V8H11zM2.500 10H9v5.500H2.500zM11 10h6.500v5.500H11z" fill="#8fb0dc" stroke="#6583b2"/></svg>
        <svg class="ml-[5px] h-[6px] w-[8px]"><use href="#caret"/></svg>
      </section>
      <svg class="mt-[7px] ml-[827px] h-[22px] w-[22px]" viewBox="0 0 22 22"><path d="M11 0a11 11 0 0 1 11 11v11H11A11 11 0 0 1 11 0z" fill="#000"/><path d="M5 14l7-6M8 14l7-6M11 14l2-2M14 14v-5" stroke="#fff" stroke-width="1.200"/></svg>
    </div>
  </main>

  <!-- Design history timeline -->
  <section class="flex h-[65px] shrink-0 items-start bg-[#f1f1f1]">
    <svg class="mt-[20px] ml-[14px] h-[22px] w-[150px]" viewBox="0 0 150 22" fill="#5c5c5c"><path d="M0 2h2.500v18H0zM16 2v18L3.500 11zM46 3v16L33 11zM47 7h3v8h-3zM67 1l16 10-16 10zM99.500 7h3v8h-3zM104 3v16l12-8zM134 2v18l12-9zM147 2h2.500v18H147z"/></svg>
    <div class="relative mt-[9px] ml-[28px] w-[923px]">
      <div class="h-[8px] bg-[#ffaeb3]"></div>
      <div id="history" class="-mt-[3px] -ml-[3px] flex"></div>
      <div class="ml-[12px] h-[2px] w-[899px] bg-[#ccc]"></div>
      <svg class="absolute top-[1px] left-[916px] h-[44px] w-[18px]" viewBox="0 0 18 44"><path d="M1 1h16v6l-6 5v32H7.500V12L1 7z" fill="#606060"/></svg>
    </div>
    <svg class="mt-[21px] ml-[895px] h-[20px] w-[20px]"><use href="#gear"/></svg>
  </section>

  <!-- Windows taskbar -->
  <footer class="flex h-[65px] shrink-0 items-center border-t-[3px] border-[#555] bg-linear-to-r from-[#21211f] via-[#1e2327] via-60% to-[#211f1b] pb-[2px] font-['Open_Sans','Noto_Sans',sans-serif] text-white">
    <svg class="ml-[26px] h-[42px] w-[42px]" viewBox="26 1227 42 42"><path d="M57 1240C58 1256 48 1264 40 1263Q31 1262 28 1252C38 1256 48 1250 46 1238z" fill="url(#moon)"/><circle cx="52" cy="1236" r="10.500" fill="#c42b1c"/><text x="52" y="1241.500" text-anchor="middle" font-size="14.500" fill="#fff" font-family="Open Sans">5</text></svg>
    <svg class="ml-[175px] h-[31px] w-[31px]" viewBox="0 0 31 31" fill="url(#win)"><path d="M0 1q0-1 1-1h14v15H0zM16 0h14q1 0 1 1v14H16zM0 16h15v15H1q-1 0-1-1zM16 16h15v14q0 1-1 1H16z"/></svg>
    <div class="ml-[19px] flex h-[40px] w-[290px] items-center rounded-full bg-[#f3f3f2] pl-[15px] text-[#5c5c5c]">
      <svg class="h-[20px] w-[20px]" viewBox="0 0 20 20" fill="none" stroke="#222" stroke-width="2"><circle cx="8" cy="8" r="7"/><path d="M13 13l6 6"/></svg>
      <span class="ml-[13px] flex-1 text-[17px]">Search</span>
      <svg class="mr-[6px] h-[36px] w-[62px]" viewBox="0 0 62 36"><path d="M1 20l5-1v14H1z" fill="#3f4f78"/><path d="M6 18q6-4 9 0v16H6z" fill="#5b6f9a"/><path d="M1 23h14M1 27h14M1 31h14" stroke="#b5c4dd" stroke-width="1.200"/><path d="M18 1v30" stroke="#e5446d" stroke-width="1.800"/><circle cx="18" cy="10" r="2.800" fill="#e5446d"/><circle cx="18" cy="19" r="4" fill="#c43a68"/><path d="M14 34l4-13 4 13z" fill="#7a4aa0"/><path d="M26 8l5 1v22h-5z" fill="#3f86d6"/><path d="M27.500 10h3v4h-3z" fill="#dff0fc"/><path d="M39 3l6-2v31h-6z" fill="#2f6f80"/><path d="M42 3v29" stroke="#7fc4cc" stroke-width="1.500"/><path d="M45 20h6v12h-6z" fill="#8a5a9a"/><path d="M51 17q4-4 8 0v15h-8z" fill="#c98f3c"/><path d="M51 21h8M51 26h8" stroke="#8a5c20"/><path d="M24 26q5-6 11 0v6H24z" fill="#f0c987"/><circle cx="24" cy="27" r="3" fill="#2fb0d8"/><circle cx="36" cy="26" r="3" fill="#2fa0d8"/><path d="M3 32q14-5 28-2 16-4 28 0-4 5-28 5T3 32z" fill="#5fae2c"/></svg>
    </div>
    <div class="ml-[5px] grid w-[1055px] grid-cols-18 *:relative *:flex *:h-[54px] *:flex-col *:items-center *:justify-center">
      <div><svg class="h-[32px] w-[34px]" viewBox="0 0 34 32"><path d="M9 1h24v21H9z" fill="#f5f5f5"/><path d="M1 9h24v21H1z" fill="#666"/><path d="M9 9h16v13H9z" fill="#b5b5b5"/></svg></div>
      <div><svg class="size-[33px]" viewBox="0 0 32 32"><circle cx="16" cy="16" r="16" fill="#1672c4"/><path d="M0 15C1-4 31-5 32 14c0 6-6 8-12 7-3-1 0-3-1-6C16 7 3 6 0 15z" fill="url(#edgeG)"/><path d="M10 17c-2 8 6 15 18 10-6 7-20 6-20-5 0-5 1-8 6-10-2 1-3.500 3-4 5z" fill="#0f4f9c"/></svg></div>
      <div><svg class="h-[24px] w-[27px]" viewBox="0 0 27 24"><path d="M8 0h7q2 0 3 4l1 3h-5q-2 0-3 4l-2 7q-1 4-4 4Q0 22 1 13L3 5Q4 0 8 0z" fill="url(#copA)"/><path d="M19 24h-7q-2 0-3-3l-1-3h5q2 0 3-4l2-7q1-4 4-4 5 0 4 8l-2 8q-1 5-5 5z" fill="url(#copB)"/></svg></div>
      <div><svg class="h-[30px] w-[33px]" viewBox="0 0 33 30"><path d="M1 2q0-2 2-2h8l4 4v8H1z" fill="#e5a000"/><path d="M1 6h10l4-2h16q2 0 2 2v23H1z" fill="url(#fold)"/><path d="M6 29v-6q0-4 4-4h13q4 0 4 4v6z" fill="#0f78d0"/><path d="M11 25h12" stroke="#0a4f95" stroke-width="2"/></svg><i class="absolute bottom-0 h-[4px] w-[7px] rounded-full bg-[#9a9a9a]"></i></div>
      <div><svg class="h-[32px] w-[32px]" viewBox="0 0 32 32"><path d="M9 7V1h14v6" fill="none" stroke="#31b3e8" stroke-width="2.500"/><path d="M0 6h32v22q0 4-4 4H4q-4 0-4-4z" fill="#f5f5f5"/><path d="M10 12h6v6h-6z" fill="#f25022"/><path d="M17 12h6v6h-6z" fill="#7fba00"/><path d="M10 19h6v6h-6z" fill="#00a4ef"/><path d="M17 19h6v6h-6z" fill="#ffb900"/></svg></div>
      <div><svg class="size-[32px]" viewBox="0 0 32 32"><path d="M0 0h32v32H0z" fill="#e2120a"/><path d="M8 26l3-20v17h13l-6 3z" fill="#7d0a08"/><path d="M10 5h4v15h10v4H10z" fill="#fff"/></svg></div>
      <div><svg class="size-[32px]" viewBox="0 0 32 32"><circle cx="16" cy="16" r="16" fill="url(#teal)"/><path d="M15.500 27V12a5 5 0 1 1 4.500 5" fill="none" stroke="#fff" stroke-width="2"/><ellipse cx="12.500" cy="27" rx="3.500" ry="2.500" fill="#fff"/></svg></div>
      <div><svg class="-mt-[6px] ml-2 h-[40px] w-[40px]" viewBox="0 0 40 40"><circle cx="16" cy="24" r="16" fill="#34a853"/><path d="M16 24L2.100 16A16 16 0 0 1 29.900 16z" fill="#ea4335"/><path d="M16 24V40A16 16 0 0 0 29.900 16H16z" fill="#fbbc04"/><path d="M2.100 16L9 28l7-4V16z" fill="#ea4335"/><path d="M2.100 16a16 16 0 0 0 13.900 24l7-12-7-4-7 4z" fill="#34a853"/><circle cx="16" cy="24" r="7.600" fill="#fff"/><circle cx="16" cy="24" r="6" fill="#2a6fe8"/><circle cx="28" cy="12" r="10.500" fill="#7b1fa2"/><text x="28" y="17" font-size="13.500" fill="#e8d3f0" text-anchor="middle" font-family="Open Sans">D</text></svg><i class="absolute bottom-0 h-[4px] w-[7px] rounded-full bg-[#9a9a9a]"></i></div>
      <div><svg class="size-[32px]" viewBox="0 0 32 32"><path d="M0 0h32v32H0z" fill="#d64027"/><circle cx="16" cy="16" r="9" fill="none" stroke="#fff" stroke-width="3.500" stroke-dasharray="4.600 2.470"/><circle cx="16" cy="16" r="5" fill="none" stroke="#fff" stroke-width="1.600" stroke-dasharray="1.600 2.330"/></svg></div>
      <div><svg class="size-[32px]" viewBox="0 0 32 32"><circle cx="16" cy="16" r="16" fill="#1ed760"/><path d="M6 11q11-4 20 2M7.500 16.500q9-3 16.500 2M8.500 21.500q8-2.500 13.500 1.500" fill="none" stroke="#1c2420" stroke-width="2.700" stroke-linecap="round"/></svg></div>
      <div><svg class="h-[32px] w-[34px]" viewBox="0 0 34 32"><path d="M0 18l9-4 6-7 4-4-6 18-4 4z" fill="#3a86c0"/><path d="M22 1c3 6 7 17 11 23-5-3-7-1-10 2l-8 5-5-9 5-5q3-9 7-16z" fill="url(#mat)"/></svg></div>
      <div><svg class="h-[33px] w-[34px]" viewBox="0 0 34 33"><path d="M3 6l12-6 13 5v20l-10 5L3 24z" fill="#b11418"/><path d="M3 6l12-6 13 5-11 5z" fill="#ee2e30"/><path d="M17 10l11-5v20l-11 5z" fill="#7c0c10"/><text x="3" y="22" font-size="17" font-weight="bold" fill="#fff" font-family="Liberation Sans" textLength="25" lengthAdjust="spacingAndGlyphs">SW</text><text x="14.500" y="31.500" font-size="9" font-weight="bold" fill="#fff" font-family="Liberation Sans" textLength="17" lengthAdjust="spacingAndGlyphs">2023</text></svg></div>
      <div><svg class="h-[30px] w-[33px]" viewBox="0 0 33 30"><path d="M4 10L18 0l14 10v16q0 3-3 3H10q-6 0-6-6z" fill="#2ba3ea"/><path d="M10 24L32 10v16q0 3-3 3H12z" fill="#4dd0f7"/><path d="M4 10L18 1l8 5-14 9z" fill="#1173c9"/><rect y="9" width="17" height="17" rx="2" fill="#0a63bd"/><circle cx="8.500" cy="17.500" r="4.500" fill="none" stroke="#fff" stroke-width="2.200"/></svg><i class="absolute bottom-0 h-[4px] w-[7px] rounded-full bg-[#9a9a9a]"></i></div>
      <div><svg class="h-[32px] w-[32px]" viewBox="0 0 32 32"><path d="M16 0l9 10-9 9-9-9z" fill="#4a9bea"/><path d="M16 9h16v15H16z" fill="#2474d2"/><circle cx="17" cy="25" r="7" fill="#123f91"/><rect y="9" width="16" height="16" rx="2" fill="#1a57b5"/><text x="8" y="22" text-anchor="middle" font-size="13" font-weight="bold" fill="#fff" font-family="Liberation Sans">V</text></svg><i class="absolute bottom-0 h-[4px] w-[7px] rounded-full bg-[#9a9a9a]"></i></div>
      <div><svg class="size-[32px]" viewBox="0 0 32 32"><rect width="32" height="32" rx="6" fill="#00a83f"/><path d="M8 7h7v18H8zM17 7h7v18h-7z" fill="#fff"/><path d="M8 19l7-4M24 13l-7 4M13 7v7M19 18v7" stroke="#00a83f" fill="none" stroke-width="1.300"/></svg><i class="absolute bottom-0 h-[4px] w-[7px] rounded-full bg-[#9a9a9a]"></i></div>
      <div><svg class="h-[32px] w-[32px]" viewBox="0 0 32 32"><path d="M0 13h8M12 3v27" stroke="#8fc31f" stroke-width="2"/><path d="M5 9l5 4-5 4z" fill="#8fc31f"/><text x="13" y="20" font-size="30" font-weight="bold" fill="#a0cc3a" font-family="Open Sans" textLength="18" lengthAdjust="spacingAndGlyphs">e</text><text x="15" y="29.500" font-size="8" font-weight="bold" fill="#fff" font-family="Liberation Sans" textLength="15" lengthAdjust="spacingAndGlyphs">2025</text></svg><i class="absolute bottom-0 h-[4px] w-[7px] rounded-full bg-[#9a9a9a]"></i></div>
      <div class="mx-[3px] rounded-[5px] border border-[#3c3c3b] bg-[#2f2f2e]"><svg class="h-[32px] w-[32px]"><use href="#fusion"/></svg><i class="absolute bottom-0 h-[4px] w-[21px] rounded-full bg-[#4cc2ff]"></i></div>
      <div><svg class="size-[32px]" viewBox="0 0 32 32"><path d="M0 0h32v32H0z" fill="#fff"/><path d="M1 10L14 2v6l-6 4-7 4zM31 10L18 2v6l6 4 7 4zM1 19l7 3 8 4 8-4 7-3v3l-15 9-15-9z" fill="#68a83c"/><path d="M8 13l8-4 8 4-8 4zM1 17l5-3 5 4-4 3zM31 17l-5-3-5 4 4 3z" fill="#68a83c"/></svg><i class="absolute bottom-0 h-[4px] w-[7px] rounded-full bg-[#9a9a9a]"></i></div>
    </div>
    <svg class="ml-[92px] h-[8px] w-[14px]" viewBox="0 0 14 8"><path d="M1 7.500L7 1.500l6 6" fill="none" stroke="#fff" stroke-width="1.500"/></svg>
    <svg class="ml-[25px] h-[20px] w-[24px]" viewBox="0 0 24 20"><path d="M5 14q-5-1-4-6 1-3 4-3 3-6 9-4 4 2 4 6l2 7z" fill="#bdbdbd"/><circle cx="16" cy="13.500" r="6.500" fill="#d8232f"/><path d="M13.500 11l5 5M18.500 11l-5 5" stroke="#fff" stroke-width="1.500"/></svg>
    <svg class="ml-[19px] h-[18px] w-[22px]" viewBox="0 0 22 18" fill="none" stroke="#fff" stroke-width="1.500"><path d="M1 7q10-10 20 0M4 10q7-7 14 0M7 13q4-4 8 0"/><circle cx="11" cy="15.500" r="1.200" fill="#fff"/></svg>
    <svg class="ml-[10px] h-[18px] w-[22px]" viewBox="0 0 22 18" fill="none" stroke="#fff" stroke-width="1.400"><path d="M1 6h4l5-4.500v15L5 12H1z"/><path d="M13 6q2 3 0 6"/><path d="M16 3.500q4 5.500 0 11M18.500 1q5 8 0 16" stroke="#777"/></svg>
    <svg class="ml-[9px] h-[20px] w-[22px]" viewBox="0 0 22 20" fill="none" stroke="#fff" stroke-width="1.500"><path d="M8 5h9q2 0 2 2v8q0 2-2 2H4q-2 0-2-2v-2M21 9v4"/><path d="M9 8h7v6H7z" fill="#fff"/><path d="M5 0L1.500 7h3L3 12l5-7H5z" fill="#fff" stroke="none"/></svg>
    <div class="ml-[9px] w-[78px] text-right text-[15.500px] leading-[21px] tracking-[-0.200px] whitespace-nowrap"><div>10:03 PM</div><div>9/3/2025</div></div>
    <svg class="ml-[11px] h-[22px] w-[20px]" viewBox="0 0 20 22"><path d="M2 16V9q0-8 7-8 3 0 4 1v9h3v3l2 2v1H1zM6 18.500h7q-1 3-3.500 3T6 18.500z" fill="#fff"/><path d="M6 7h4l-4 5h4" stroke="#222" fill="none" stroke-width="1.300"/><path d="M13 1.500h5l-5 6h5" stroke="#fff" fill="none" stroke-width="1.500"/></svg>
  </footer>
</div>

<!-- Update notification -->
<aside class="absolute top-[90px] left-[1563px] flex h-[137px] w-[398px] rounded-[6px] border border-l-[5px] border-[#ccc] border-l-[#0696d7] bg-white pt-[22px] pl-[26px] text-[16px] shadow-[0_2px_14px_rgba(0,0,0,0.25)]">
  <svg class="-mt-[1px] h-[32px] w-[32px]" viewBox="0 0 32 32"><circle cx="16" cy="16" r="15" fill="none" stroke="#0696d7" stroke-width="2"/><circle cx="16.500" cy="9" r="2.200" fill="#0696d7"/><path d="M12.500 14h4.500v10.500M12 24.500h9" stroke="#0696d7" stroke-width="2.600" fill="none"/></svg>
  <div class="ml-[30px] flex-1 leading-[19px] whitespace-nowrap">
    <h2 class="pt-px font-bold">Update ready to install</h2>
    <p class="pt-[5px] pl-px">Next time you start Fusion, you'll<br>be up to date!</p>
    <a class="mt-[6px] ml-px block font-['Open_Sans','Noto_Sans',sans-serif] text-[15px] text-[#0696d7] underline underline-offset-2">Restart Fusion now</a>
  </div>
  <svg class="-mt-[5px] mr-[19px] h-[20px] w-[20px]" viewBox="0 0 20 20"><path d="M1 1l18 18M19 1L1 19" stroke="#555" stroke-width="1.700"/></svg>
</aside>

<script>
  const rows = [
    ['gear', '', 'Document Settings', 179, 16], ['folder', '', 'Named Views', 147, 18],
    ['eyeoff', 'folder', 'Origin', 132, 18], ['eye', 'folder', 'Bodies', 137, 18], ['eye', 'folder', 'Canvases', 159, 18],
    ['eye', 'folder', 'Sketches', 153, 18], ['eye', 'folder', 'Construction', 175, 18]
  ];
  document.getElementById('tree').innerHTML = rows.map(([a, b, label, w, ml]) => `
    <div class="flex h-[26px] items-center">
      <svg class="h-[14px] w-[10px]"><use href="#arrow"/></svg>
      <div class="ml-[13px] flex h-[26px] items-center bg-[#f1f1f1] pl-[4px] whitespace-nowrap" style="width:${w}px">
        <svg class="${a === 'gear' ? 'h-[18px] w-[19px]' : a === 'folder' ? 'h-[18px] w-[22px]' : 'h-[16px] w-[22px]'}"><use href="#${a}"/></svg>
        ${b ? '<i class="ml-[6px] h-[26px] w-px bg-[#f8f8f8]"></i><svg class="ml-[4px] h-[18px] w-[22px]"><use href="#folder"/></svg>' : ''}
        <span class="mt-px" style="margin-left:${b ? ml + 1 : ml}px">${label}</span>
      </div>
    </div>`).join('');
  const steps = 'canvas sketch sketch sketch canvas sketch sketch sketch sketch sketch plane sketch extrude sketch! extrude sketch extrude fillet sketch scale sketch sketch sketch shell sketch extrude sketch extrude extrude'.split(' ');
  document.getElementById('history').innerHTML = steps.map(s => {
    const k = s.replace('!', ''), id = ['canvas', 'sketch', 'scale'].includes(k) ? 't-' + k : k;
    return `<div class="flex w-[32px] shrink-0 flex-col items-center">
      <div class="flex h-[31px] w-[32px] items-center justify-center rounded-[3px] ${s.endsWith('!') ? 'bg-[#e6e820]' : ''}"><svg class="size-[22px]"><use href="#${id}"/></svg></div>
      <i class="h-[7px] w-[3px] bg-[#ccc]"></i></div>`;
  }).join('');
</script>
</body>
</html>
